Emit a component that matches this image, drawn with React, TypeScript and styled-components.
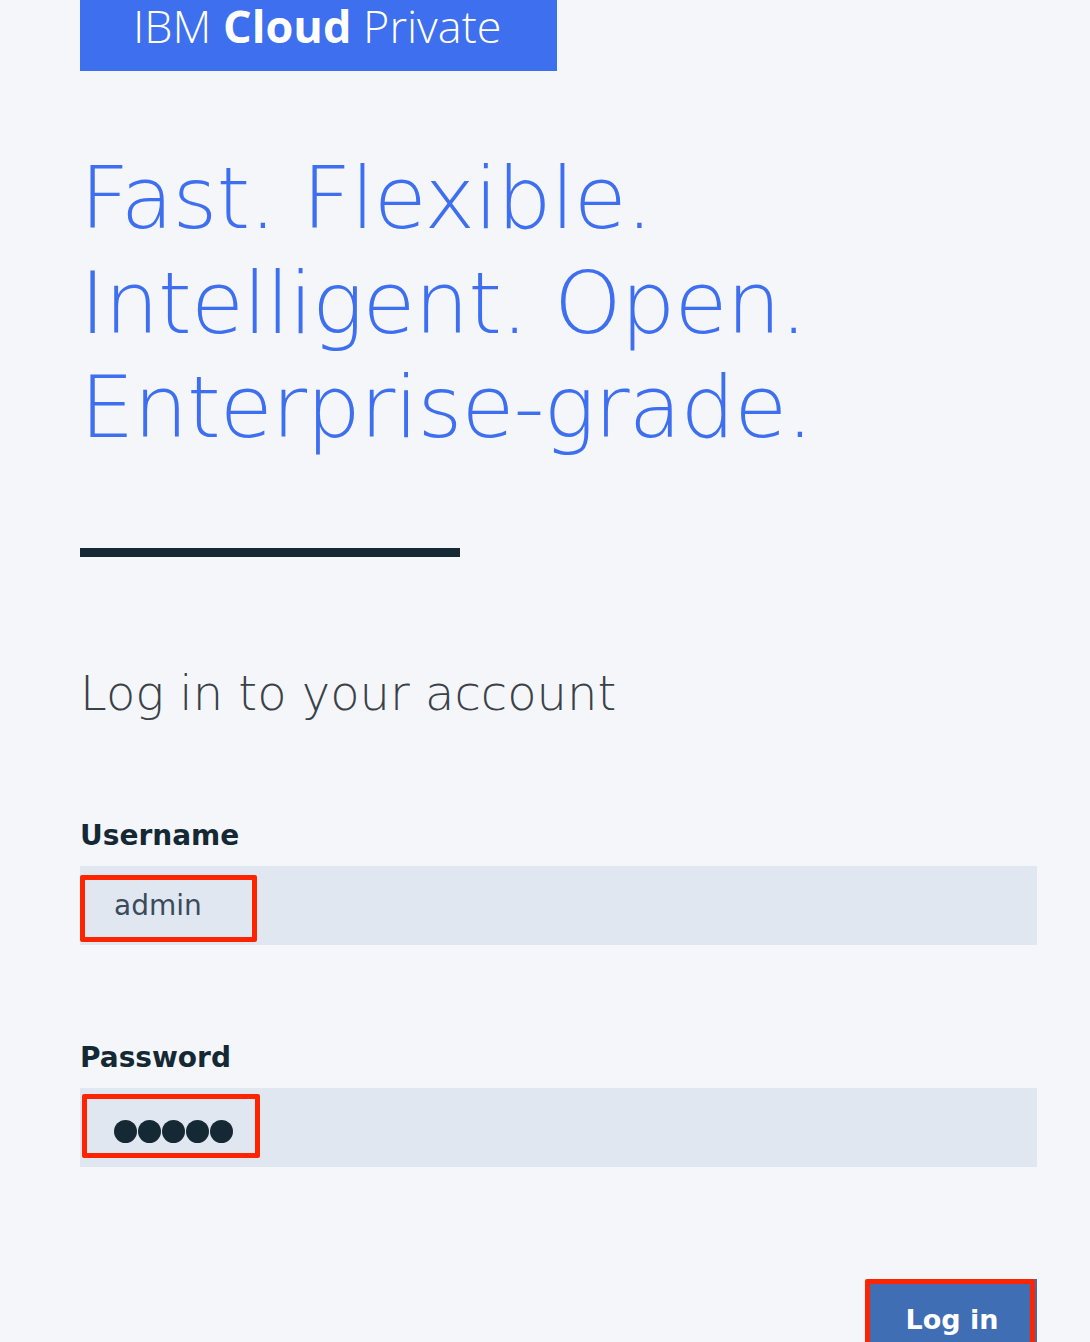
import styled, { createGlobalStyle } from "styled-components";

const GlobalStyle = createGlobalStyle`
  html, body {
    margin: 0;
    padding: 0;
    background-color: #f4f6fa;
  }
  body {
    font-family: "DejaVu Sans", "Liberation Sans", sans-serif;
  }
`;

const Page = styled.div`
  width: 957px;
  padding: 0 0 0 80px;
  display: flex;
  flex-direction: column;
  height: 1342px;
  overflow: hidden;
  & > * {
    flex-shrink: 0;
  }
`;

const Brand = styled.div`
  width: 477px;
  height: 71px;
  box-sizing: border-box;
  padding: 3px 0 0 53px;
  background-color: #3d6fee;
  color: #ffffff;
  font-family: "Open Sans", sans-serif;
  font-size: 45px;
  line-height: 1;
  font-weight: 300;
  white-space: nowrap;
  b {
    font-weight: 700;
  }
`;

const Headline = styled.h1`
  margin: 75px 0 0 0;
  font-size: 86px;
  line-height: 104.5px;
  font-weight: 200;
  color: #3e6ff0;
  letter-spacing: -0.9px;
`;

const Divider = styled.div`
  margin-top: 88px;
  width: 380px;
  height: 9px;
  background-color: #152935;
`;

const Title = styled.h2`
  margin: 108px 0 0 0;
  font-size: 48px;
  line-height: 57.6px;
  font-weight: 200;
  color: #3a4149;
`;

const Form = styled.form`
  margin-top: 98px;
  display: flex;
  flex-direction: column;
  & > * {
    flex-shrink: 0;
  }
`;

const Label = styled.label<{ $first?: boolean }>`
  margin-top: ${(p) => (p.$first ? "0" : "97px")};
  font-size: 28px;
  line-height: 32px;
  font-weight: 700;
  color: #152935;
`;

const Field = styled.div`
  position: relative;
  margin-top: 14px;
  height: 79px;
  padding-left: 34px;
  display: flex;
  align-items: center;
  background-color: #e0e7f1;
  font-size: 28px;
  color: #394b5c;
`;

const Dots = styled.div`
  display: flex;
  gap: 1px;
  padding-top: 8px;
`;

const Dot = styled.span`
  width: 23px;
  height: 23px;
  border-radius: 50%;
  background-color: #152935;
`;

const Actions = styled.div`
  margin-top: 112px;
  display: flex;
  justify-content: flex-end;
`;

const Button = styled.button`
  position: relative;
  width: 170px;
  height: 80px;
  padding: 0;
  border: none;
  background-color: #406eb4;
  color: #ffffff;
  font-family: "DejaVu Sans", sans-serif;
  font-size: 27px;
  font-weight: 700;
`;

const Highlight = styled.span<{ $left: number; $top: number; $w: number; $h: number }>`
  position: absolute;
  left: ${(p) => p.$left}px;
  top: ${(p) => p.$top}px;
  width: ${(p) => p.$w}px;
  height: ${(p) => p.$h}px;
  box-sizing: border-box;
  border: 5px solid #ff2400;
  border-radius: 2px;
  pointer-events: none;
`;

function App() {
  return (
    <>
      <GlobalStyle />
      <Page>
        <Brand>
          IBM <b>Cloud</b> Private
        </Brand>
        <Headline>
          Fast. Flexible.
          <br />
          Intelligent. Open.
          <br />
          Enterprise-grade.
        </Headline>
        <Divider />
        <Title>Log in to your account</Title>
        <Form onSubmit={(e) => e.preventDefault()}>
          <Label $first>Username</Label>
          <Field>
            admin
            <Highlight $left={0} $top={9} $w={177} $h={67} />
          </Field>
          <Label>Password</Label>
          <Field>
            <Dots>
              {[0, 1, 2, 3, 4].map((i) => (
                <Dot key={i} />
              ))}
            </Dots>
            <Highlight $left={2} $top={6} $w={178} $h={64} />
          </Field>
          <Actions>
            <Button type="submit">
              Log in
              <Highlight $left={-2} $top={0} $w={170} $h={80} />
            </Button>
          </Actions>
        </Form>
      </Page>
    </>
  );
}

export default App;
